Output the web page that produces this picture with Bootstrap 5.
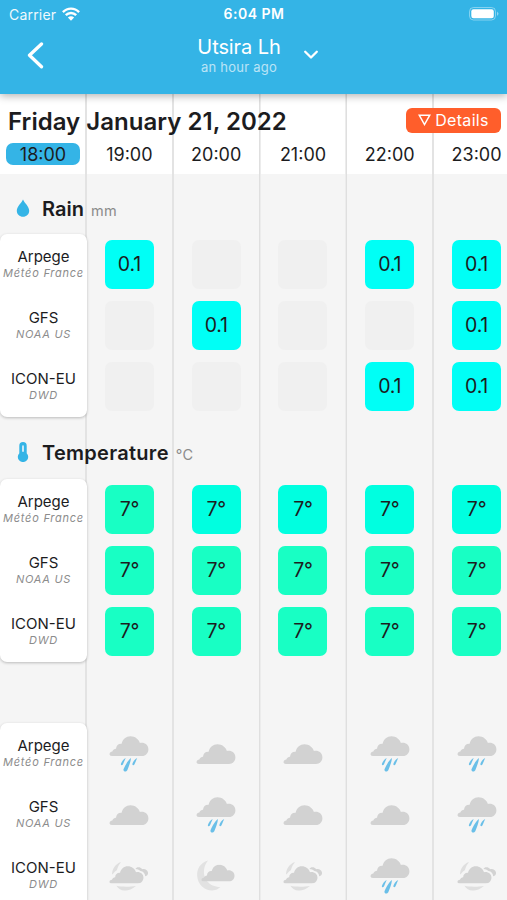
<!DOCTYPE html>
<html lang="en">
<head>
<meta charset="utf-8">
<meta name="viewport" content="width=device-width, initial-scale=1">
<title>Utsira Lh</title>
<link href="https://cdn.jsdelivr.net/npm/bootstrap@5.3.0/dist/css/bootstrap.min.css" rel="stylesheet">
<style>
:root{--rules:linear-gradient(90deg,transparent 85px,#e3e3e3 85px 87px,transparent 87px 172px,#e3e3e3 172px 174px,transparent 174px 259px,#dfdfdf 259px 260px,#ececec 260px 261px,transparent 261px 345px,#ececec 345px 346px,#dfdfdf 346px 347px,transparent 347px 432px,#e3e3e3 432px 434px,transparent 434px)}
html,body{height:900px;overflow:hidden}
body{font-family:Inter,"Liberation Sans",sans-serif;color:#1c1c1e;background:#f5f5f5}
.topbar{height:94px;background:#34b4e6;color:#fff;box-shadow:0 2px 8px rgba(0,0,0,.3);z-index:2}
.status{height:28px;font-size:14px;padding:0 8px 0 9px}
.status>*{flex:1 1 0}
.carrier{letter-spacing:.2px;opacity:.93}
.wifi{margin-left:6px;margin-top:-1px}
.clock{font-weight:600;letter-spacing:.5px;margin-top:-1px}
.titlebar{display:grid;grid-template-columns:170px 138px 1fr;height:54px;padding-left:27px}
.place{font-size:20px;line-height:24px;letter-spacing:-.1px}
.ago{font-size:13px;line-height:16px;letter-spacing:.25px;opacity:.65}
.title-texts{width:84px}
.board{height:806px;overflow:hidden;background:var(--rules)}
.dayhead{height:80px;background:var(--rules),#fff}
.dayline{height:46px;padding:9px 6px 0 8px}
.daytitle{font-size:24px;font-weight:600;line-height:38px;white-space:nowrap;letter-spacing:.03px}
.details{background:#ff5e2b;color:#fff;width:95px;height:25px;border-radius:6px;font-size:16px;letter-spacing:.3px;margin-top:-3px}
.details span{margin-top:-1px}
.slots{display:grid;grid-template-columns:86px repeat(5,86.8px)}
.hours{font-size:18px;line-height:23px;height:34px;padding-top:3px;text-align:center}
.now{background:#34b4e6;border-radius:7px;height:22px;margin:0 6px}
.section-title{height:60px;padding:10px 0 0 16px;font-size:20px;font-weight:600}
.section-title.later{height:62px;letter-spacing:.28px}
.section-title svg{width:14px;height:20px;margin-right:12px;margin-top:-2px}
.unit{font-size:14.5px;font-weight:400;color:#8b8b8b;letter-spacing:.3px;margin-left:7px;padding-top:4px}
.gap-row{height:61px}
.models{width:87px;background:#fff;border-radius:7px;box-shadow:0 1px 3px rgba(0,0,0,.24);text-align:center;grid-row:span 3}
.model{height:61px;padding-top:13px;white-space:nowrap}
.model b{display:block;font-weight:400;font-size:15px;line-height:19px}
.model i{display:block;font-size:11px;line-height:14px;letter-spacing:.75px;color:#8c8c8c}
.slot{height:61px;display:flex;align-items:center;justify-content:center}
.tile{width:49px;height:49px;border-radius:7px;background:#f0f0f0;font-size:19.5px;line-height:49px;text-align:center;letter-spacing:-.2px}
.wet{background:#00fff6}
.t1{background:#18ffc4}
.t2{background:#00ffe0}
.wx{width:40px;height:40px}
</style>
<script src="https://cdn.jsdelivr.net/npm/bootstrap@5.3.0/dist/js/bootstrap.bundle.min.js"></script>
</head>
<body>
<svg width="0" height="0" class="d-none">
  <symbol id="cloud" viewBox="0 0 40 20"><path fill="#d2d2d2" d="M3 20C1.300 20 .4 19 .6 17.700C.8 16.300 2 15.900 3.300 15.600C4.200 13.700 5.300 13 7 12.800C7.200 9.300 9.600 7.400 12.600 7.700C13.900 3 17 .2 21.500 .2C26 .2 29.600 3 30.900 7C35.500 6.100 39.400 9 39.400 13.200C39.400 17 36.700 20 33 20Z"/></symbol>
  <symbol id="cloudy" viewBox="0 0 40 40"><use href="#cloud" y="10" width="40" height="20"/></symbol>
  <symbol id="rainy" viewBox="0 0 40 40"><use href="#cloud" y="2" width="40" height="20"/><g fill="#6abfe8"><path d="M16.700 24C14.600 25 12.500 27.700 11.900 30C11.700 31.500 13.200 31.600 13.900 30.400Z"/><path d="M22 24C19.500 25.700 16.500 30.500 14.500 35.200C14 37.600 17 38.400 18.300 36.200C19.700 32.600 21.600 28.500 22 24Z"/><path d="M28.200 24C26 25 23.900 27.600 23.400 30C23.300 31.500 24.900 31.500 25.500 30.300Z"/></g></symbol>
  <symbol id="moony" viewBox="0 0 40 40"><path fill="#e2e2e2" d="M12 4.500C4 7 .7 13 1.200 20C1.800 29 9 34.600 16.500 34.400C20 34.300 22.500 33 24.300 31C13 31 6.500 22 8.200 13C8.700 9.600 10 7 12 4.500Z"/><use href="#cloud" x="5" y="8.500" width="34" height="17"/></symbol>
  <symbol id="mixed" viewBox="0 0 40 40"><g fill="#dfdfdf"><path d="M12 6C6.500 8 3.200 12.500 3 18.500C4.500 18 5.500 15.500 7.800 14.300C8.800 11 10 8.500 12 6Z"/><path d="M7.500 29.800C12 31 21 31 27 30C23 33.400 19.500 34.600 15.500 34.500C12 34.400 9.200 33 7.500 29.800Z"/><path fill="#d3d3d3" d="M26.500 13C27.500 10.600 31 10.400 33.500 13.200C36 12.700 38.500 14 39 16.500C39.300 18.500 38.200 19.800 36.200 20.200C36 17.300 34.300 15.400 31.500 15C30 13.800 28.500 13.200 26.500 13Z"/></g><use href="#cloud" y="10" width="35" height="17.500"/></symbol>
</svg>

<header class="topbar position-relative">
  <div class="status d-flex align-items-center">
    <div class="d-flex align-items-center"><span class="carrier">Carrier</span>
      <svg class="wifi" width="18" height="14" viewBox="0 0 18 14" fill="none" stroke="#fff" stroke-width="2.400"><path d="M.9 5.200C5.500.4 12.500.4 17.100 5.200"/><path d="M3.800 8.200C6.800 5.200 11.200 5.200 14.200 8.200"/><path fill="#fff" stroke="none" d="M5.900 10.600C7.700 8.900 10.300 8.900 12.100 10.600L9 13.700Z"/></svg></div>
    <div class="clock text-center">6:04 PM</div>
    <div class="d-flex justify-content-end"><svg width="30" height="14" viewBox="0 0 30 14"><rect x=".5" y=".5" width="26" height="12.500" rx="4" fill="none" stroke="#fff" stroke-opacity=".4"/><rect x="2.300" y="2.300" width="22.500" height="9" rx="2.200" fill="#fff"/><path d="M28 4.500Q31 6.800 28 9Z" fill="#fff" fill-opacity=".45"/></svg></div>
  </div>
  <div class="titlebar align-items-center">
    <div><svg class="d-block" width="17" height="27" viewBox="0 0 17 27" fill="none" stroke="#fff" stroke-width="3.300" stroke-linecap="round" stroke-linejoin="round"><path d="M14.500 2L2.500 13.300L14.500 24.800"/></svg></div>
    <div class="d-flex align-items-center">
      <div class="text-center text-nowrap title-texts"><div class="place">Utsira Lh</div><div class="ago">an hour ago</div></div>
      <svg class="ms-auto me-3" width="16" height="10" viewBox="0 0 15 10" fill="none" stroke="#fff" stroke-width="2.300" stroke-linecap="round" stroke-linejoin="round"><path d="M1.700 1.700L7.500 7.500L13.300 1.700"/></svg>
    </div>
  </div>
</header>

<main class="board">
  <div class="dayhead">
    <div class="dayline d-flex justify-content-between align-items-center">
      <div class="daytitle">Friday January 21, 2022</div>
      <div class="details d-flex align-items-center justify-content-center"><svg width="13" height="12" viewBox="0 0 13 12" fill="none" stroke="#fff" stroke-width="1.500" class="me-1"><path d="M1.200 1.200H11.800L6.500 10.500Z"/></svg><span>Details</span></div>
    </div>
    <div class="hours slots"><div class="now">18:00</div><div>19:00</div><div>20:00</div><div>21:00</div><div>22:00</div><div>23:00</div></div>
  </div>

  <div class="section-title d-flex align-items-center"><svg viewBox="0 0 14 20"><path fill="#34b4e6" d="M7 1.500C8.500 5 13.200 8.500 13.200 12.700C13.200 16.300 10.400 18.700 7 18.700S.8 16.300 .8 12.700C.8 8.500 5.500 5 7 1.500Z"/></svg><span>Rain</span><span class="unit">mm</span></div>
  <div class="slots">
    <div class="models"><div class="model"><b>Arpege</b><i>Météo France</i></div><div class="model"><b>GFS</b><i>NOAA US</i></div><div class="model"><b>ICON-EU</b><i>DWD</i></div></div>
    <div class="slot"><div class="tile wet">0.1</div></div><div class="slot"><div class="tile"></div></div><div class="slot"><div class="tile"></div></div><div class="slot"><div class="tile wet">0.1</div></div><div class="slot"><div class="tile wet">0.1</div></div>
    <div class="slot"><div class="tile"></div></div><div class="slot"><div class="tile wet">0.1</div></div><div class="slot"><div class="tile"></div></div><div class="slot"><div class="tile"></div></div><div class="slot"><div class="tile wet">0.1</div></div>
    <div class="slot"><div class="tile"></div></div><div class="slot"><div class="tile"></div></div><div class="slot"><div class="tile"></div></div><div class="slot"><div class="tile wet">0.1</div></div><div class="slot"><div class="tile wet">0.1</div></div>
  </div>

  <div class="section-title later d-flex align-items-center"><svg viewBox="0 0 14 20"><path fill="#34b4e6" d="M3.300 3.800A3.700 3.700 0 0 1 10.700 3.800V11.200A5.200 5.200 0 1 1 3.300 11.200Z"/><path d="M7 4.300V9" stroke="#c9e9f7" stroke-width="2" stroke-linecap="round"/></svg><span>Temperature</span><span class="unit">°C</span></div>
  <div class="slots">
    <div class="models"><div class="model"><b>Arpege</b><i>Météo France</i></div><div class="model"><b>GFS</b><i>NOAA US</i></div><div class="model"><b>ICON-EU</b><i>DWD</i></div></div>
    <div class="slot"><div class="tile t1">7°</div></div><div class="slot"><div class="tile t2">7°</div></div><div class="slot"><div class="tile t2">7°</div></div><div class="slot"><div class="tile t2">7°</div></div><div class="slot"><div class="tile t2">7°</div></div>
    <div class="slot"><div class="tile t1">7°</div></div><div class="slot"><div class="tile t1">7°</div></div><div class="slot"><div class="tile t1">7°</div></div><div class="slot"><div class="tile t1">7°</div></div><div class="slot"><div class="tile t1">7°</div></div>
    <div class="slot"><div class="tile t1">7°</div></div><div class="slot"><div class="tile t1">7°</div></div><div class="slot"><div class="tile t1">7°</div></div><div class="slot"><div class="tile t1">7°</div></div><div class="slot"><div class="tile t1">7°</div></div>
  </div>

  <div class="gap-row"></div>
  <div class="slots">
    <div class="models"><div class="model"><b>Arpege</b><i>Météo France</i></div><div class="model"><b>GFS</b><i>NOAA US</i></div><div class="model"><b>ICON-EU</b><i>DWD</i></div></div>
    <div class="slot"><svg class="wx"><use href="#rainy"/></svg></div><div class="slot"><svg class="wx"><use href="#cloudy"/></svg></div><div class="slot"><svg class="wx"><use href="#cloudy"/></svg></div><div class="slot"><svg class="wx"><use href="#rainy"/></svg></div><div class="slot"><svg class="wx"><use href="#rainy"/></svg></div>
    <div class="slot"><svg class="wx"><use href="#cloudy"/></svg></div><div class="slot"><svg class="wx"><use href="#rainy"/></svg></div><div class="slot"><svg class="wx"><use href="#cloudy"/></svg></div><div class="slot"><svg class="wx"><use href="#cloudy"/></svg></div><div class="slot"><svg class="wx"><use href="#rainy"/></svg></div>
    <div class="slot"><svg class="wx"><use href="#mixed"/></svg></div><div class="slot"><svg class="wx"><use href="#moony"/></svg></div><div class="slot"><svg class="wx"><use href="#mixed"/></svg></div><div class="slot"><svg class="wx"><use href="#rainy"/></svg></div><div class="slot"><svg class="wx"><use href="#mixed"/></svg></div>
  </div>
</main>
</body>
</html>
